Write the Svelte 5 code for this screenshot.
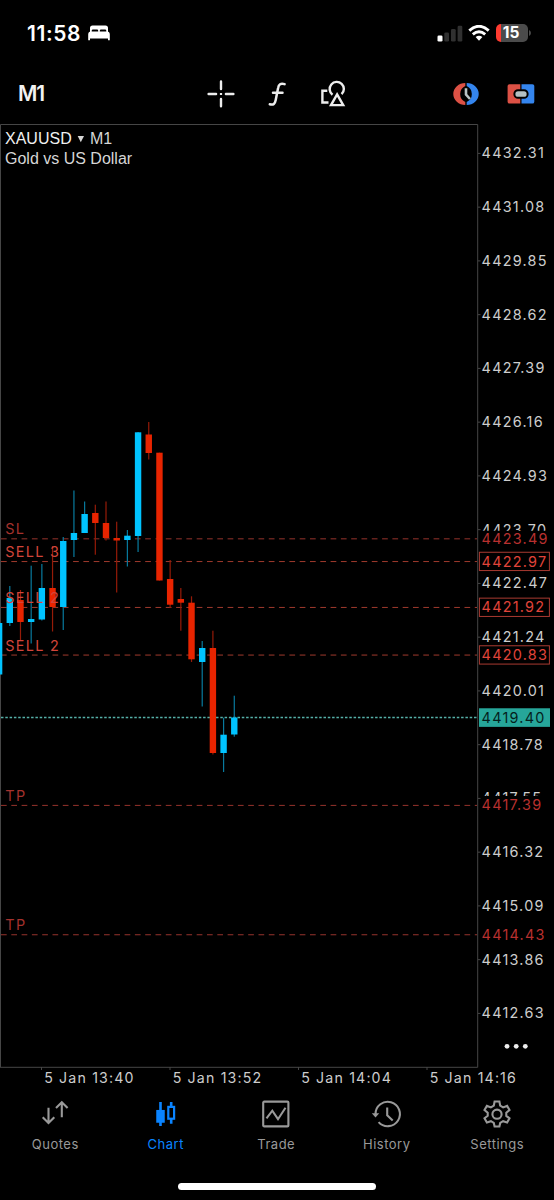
<script>
  const TOP_PRICE = 4432.31;
  const TOP_Y = 153.4;
  const PX_PER_UNIT = 43.7;

  const priceY = (price) => TOP_Y + (TOP_PRICE - price) * PX_PER_UNIT;

  let scale = Array.from({ length: 17 }, (_, i) => TOP_PRICE - i * 1.23);

  let levels = [
    { label: "SL", price: 4423.49, kind: "stop" },
    { label: "SELL 3", price: 4422.97, kind: "order" },
    { label: "SELL 2", price: 4421.92, kind: "order" },
    { label: "SELL 2", price: 4420.83, kind: "order" },
    { label: "TP", price: 4417.39, kind: "stop" },
    { label: "TP", price: 4414.43, kind: "stop" },
  ];

  const bid = 4419.4;

  // [direction, wick top, body top, body bottom, wick bottom]
  let candles = [
    ["up", 623, 623, 674.5, 674.5],
    ["up", 586, 598, 623, 626],
    ["down", 590, 600, 622, 640],
    ["up", 565.7, 619, 622, 643.5],
    ["up", 564, 588, 619.5, 620.5],
    ["down", 546, 588, 607, 631.5],
    ["up", 537, 541, 607, 630],
    ["up", 490.5, 533, 540, 557],
    ["up", 501.5, 514, 533, 533],
    ["down", 504.7, 513, 523, 554.7],
    ["down", 501.5, 523, 538, 540.5],
    ["down", 521.7, 538, 540.5, 592.5],
    ["up", 530, 535.7, 540, 566.5],
    ["up", 432, 432.3, 536, 552],
    ["down", 422, 434.5, 453, 459.5],
    ["down", 452.7, 452.7, 580.5, 580.5],
    ["down", 560, 579, 604.7, 608],
    ["down", 588, 599, 602.7, 630.7],
    ["down", 596.3, 602.7, 659.3, 662],
    ["up", 641, 648, 662, 706.5],
    ["down", 630.7, 648, 753, 754.5],
    ["up", 717.7, 734.7, 753, 772],
    ["up", 695.7, 717.5, 734.5, 736.7],
  ];

  const candleX = (i) => -0.9 + i * 10.69;

  let times = [
    { x: 41.5, text: "5 Jan 13:40" },
    { x: 170, text: "5 Jan 13:52" },
    { x: 298.5, text: "5 Jan 14:04" },
    { x: 427, text: "5 Jan 14:16" },
  ];

  let tabs = ["Quotes", "Chart", "Trade", "History", "Settings"];
  let active = "Chart";
</script>

<div class="screen">
  <header class="status">
    <div class="clock">
      <span>11:58</span>
      <svg width="22" height="16" viewBox="0 0 22 16">
        <path
          d="M2 7V3Q2 0.5 4.5 0.5H17.5Q20 0.5 20 3V7H18.3V5.8Q18.3 4.6 17 4.6H13Q11.8 4.6 11.8 5.8V7H10.2V5.8Q10.2 4.6 9 4.6H5Q3.7 4.6 3.7 5.8V7Z"
        />
        <path d="M0.2 15.3V9.6Q0.2 6.6 3 6.6H19Q21.8 6.6 21.8 9.6V15.3H20V13.6H2V15.3Z" />
      </svg>
    </div>
    <div class="indicators">
      <svg class="signal" width="26" height="17" viewBox="0 0 26 17">
        <rect x="0.5" y="10.5" width="5" height="6" rx="1.3" />
        <rect class="off" x="7.3" y="7.5" width="4.7" height="9" rx="1.3" />
        <rect class="off" x="14" y="4" width="4.7" height="12.5" rx="1.3" />
        <rect class="off" x="20.6" y="0.7" width="4.7" height="15.8" rx="1.3" />
      </svg>
      <svg class="wifi" width="22" height="16" viewBox="0 0 22 16">
        <path class="arc" d="M1.3 5.6Q11 -3 20.7 5.6" />
        <path class="arc" d="M4.8 9.3Q11 4 17.2 9.3" />
        <path d="M7.6 12.1Q11 9.3 14.4 12.1L11 15.8Z" />
      </svg>
      <div class="battery"><span>15</span></div>
      <svg class="nub" width="2" height="6" viewBox="0 0 2 6">
        <path d="M0 0Q2 0.8 2 3Q2 5.2 0 6Z" />
      </svg>
    </div>
  </header>

  <nav class="toolbar">
    <span class="frame">M1</span>
    <div class="tools">
      <svg width="28" height="28" viewBox="0 0 28 28">
        <g class="line" stroke-width="2.4">
          <path d="M14 1.5V9M14 18.9V26.3M1.6 14H9.1M18.9 14H26.4" />
          <path d="M12.9 14H15.1" stroke-width="2" stroke-linecap="butt" />
        </g>
      </svg>
      <svg width="20" height="28" viewBox="0 0 20 28">
        <path
          class="line"
          stroke-width="2.5"
          d="M17.6 4.1C13.6 2.8 11.7 4.5 11.1 8L8.7 20.1C8 23.8 6.5 25.3 2.8 24.3M6 12.7H15.5"
        />
      </svg>
      <svg width="28" height="28" viewBox="0 0 28 28">
        <g class="line shapes" stroke-width="2.4">
          <path d="M8.3 10.8H3.4V22.5H9.5" />
          <path d="M13.5 14.7A7.1 7.1 0 1 1 22.6 14.2" />
          <path d="M18.1 14.4L24.2 25.1H12Z" />
        </g>
      </svg>
    </div>
    <div class="trading">
      <svg width="28" height="24" viewBox="0 0 28 24">
        <path class="red" d="M13.3 1A11.8 10.8 0 0 0 13.3 23V20A8.8 8.8 0 0 1 13.3 4Z" />
        <path class="blue" d="M14.7 1A11.8 10.8 0 0 1 14.7 23V20A8.8 8.8 0 0 0 14.7 4Z" />
        <path class="hand" d="M14 6.2V12.5L18 17" />
      </svg>
      <svg width="28" height="22" viewBox="0 0 28 22">
        <path class="red" d="M2.5 1.2H13.3V20.6H2.5Q0.6 20.6 0.6 18.7V3.1Q0.6 1.2 2.5 1.2Z" />
        <path class="blue" d="M14.5 1.2H25.4Q27.3 1.2 27.3 3.1V18.7Q27.3 20.6 25.4 20.6H14.5Z" />
        <rect class="pill" x="7.4" y="7.2" width="13.2" height="7.6" rx="3.6" />
      </svg>
    </div>
  </nav>

  <svg class="chart" width="554" height="966" viewBox="0 124 554 966">
    <defs>
      {#each scale as price, i}
        <clipPath id="row{i}">
          <rect
            x="478"
            y={priceY(price) - 10}
            width="76"
            height={i === 7 ? 11 : i === 12 ? 7.6 : 20}
          />
        </clipPath>
      {/each}
    </defs>

    <path class="border" d="M0.5 1067V124.5H477.7V1067.3H0" />

    {#each levels as level}
      <line class="level {level.kind}" x1="1" x2="477" y1={priceY(level.price)} y2={priceY(level.price)} />
    {/each}

    <line class="bid" x1="1" x2="478" y1={priceY(bid)} y2={priceY(bid)} />

    {#each candles as [dir, high, top, bottom, low], i}
      <g class={dir}>
        <rect class="wick" x={candleX(i) - 0.6} y={high} width="1.2" height={low - high} />
        <rect x={candleX(i) - 3.2} y={top} width="6.4" height={bottom - top} />
      </g>
    {/each}

    {#each levels as level}
      <text class="tag {level.kind}" x="5.3" y={priceY(level.price) - 4.4}>{level.label}</text>
    {/each}

    <text class="symbol" x="5" y="143.5">XAUUSD</text>
    <path class="caret" d="M77.7 136H84L80.8 142.3Z" />
    <text class="title" x="90" y="143.5">M1</text>
    <text class="title" x="5" y="163.6">Gold vs US Dollar</text>

    {#each scale as price, i}
      <path class="border" d="M478 {priceY(price)}h2.5" />
      <text class="price" x="481.6" y={priceY(price) + 5} clip-path="url(#row{i})">{price.toFixed(2)}</text>
    {/each}

    {#each levels as level}
      {#if level.kind === "order"}
        <rect class="frame-box" x="479.4" y={priceY(level.price) - 9.3} width="70" height="18.3" />
      {/if}
      <text class="price {level.kind}" x="481.6" y={priceY(level.price) + 5}>{level.price.toFixed(2)}</text>
    {/each}

    <rect class="bid-box" x="479" y={priceY(bid) - 9.3} width="71" height="18.6" />
    <text class="price bid-text" x="481.6" y={priceY(bid) + 5}>{bid.toFixed(2)}</text>

    <g class="more">
      <circle cx="507" cy="1046.3" r="2.4" />
      <circle cx="516.2" cy="1046.3" r="2.4" />
      <circle cx="525.3" cy="1046.3" r="2.4" />
    </g>

    {#each times as time}
      <path class="border" d="M{time.x} 1067v3" />
      <text class="time" x={time.x + 2.7} y="1083">{time.text}</text>
    {/each}
  </svg>

  <nav class="tabs">
    {#each tabs as tab}
      <div class="tab" class:active={tab === active}>
        <svg width="32" height="32" viewBox="0 0 32 32">
          {#if tab === "Quotes"}
            <path d="M9.5 9.7V24.6M3.7 19.2L9.5 25L15.3 19.2M22.8 19.3V4.4M17 10L22.8 4.2L28.6 10" />
          {:else if tab === "Chart"}
            <g class="bars">
              <path d="M10.5 4V28M21.2 4V8.5M21.2 21V25.7" stroke-width="2.6" />
              <rect class="solid" x="7.3" y="13" width="6.4" height="10.7" />
              <rect x="18.3" y="8.9" width="5.8" height="11.8" stroke-width="2.2" />
            </g>
          {:else if tab === "Trade"}
            <rect x="3.2" y="3.6" width="25.2" height="24.8" rx="1" />
            <path d="M6.5 20.4L12.3 12.7L18 21.2L25.5 9.7" />
          {:else if tab === "History"}
            <path d="M4.5 16A12.2 12.2 0 1 1 7.6 24.1" />
            <path class="solid head" d="M0.8 15.2H8.2L4.5 19.6Z" />
            <path d="M16.2 9.4V17.2L21.7 22.4" />
          {:else}
            <path
              d="M13.6 3.5H18.4L19.2 7.7L22.1 9.4L26.1 7.9L28.5 12L25.3 14.8V17.9L28.5 20.3L26.1 24.5L22.1 23.2L19.2 24.9L18.4 28.5H13.6L12.8 24.9L9.9 23.2L5.9 24.5L3.5 20.3L6.7 17.7V14.7L3.5 12L5.9 7.9L9.9 9.4L12.8 7.7Z"
            />
            <circle cx="16" cy="16.2" r="4.6" />
          {/if}
        </svg>
        <span>{tab}</span>
      </div>
    {/each}
  </nav>

  <div class="home"></div>
</div>

<style>
  :global(body) {
    background: #000;
  }

  .screen {
    box-sizing: border-box;
    width: 554px;
    height: 1200px;
    background: #000;
    font-family: Inter, "Liberation Sans", sans-serif;
    display: flex;
    flex-direction: column;
    overflow: hidden;
  }

  .status {
    height: 66px;
    flex: none;
    display: flex;
    align-items: center;
    justify-content: space-between;
    padding: 0 23px 0 27px;
    box-sizing: border-box;
    color: #fff;
    fill: #fff;
  }

  .clock {
    display: flex;
    align-items: center;
    gap: 6px;
    font-size: 21px;
    font-weight: 600;
    letter-spacing: 0.6px;
  }

  .clock span {
    width: 55px;
  }

  .indicators {
    display: flex;
    align-items: center;
  }

  .off {
    fill: #303030;
  }

  .wifi {
    margin: 0 6px 0 5px;
  }

  .arc {
    fill: none;
    stroke: #fff;
    stroke-width: 2.9;
  }

  .battery {
    width: 32px;
    height: 18px;
    border-radius: 5px;
    background: linear-gradient(to right, #ff3b30 5px, #4b4b4b 5px);
    font-size: 15.5px;
    font-weight: 700;
    line-height: 18px;
    text-align: center;
  }

  .battery span {
    margin-right: 2px;
  }

  .nub {
    margin-left: 1px;
    fill: #4b4b4b;
  }

  .toolbar {
    height: 58px;
    flex: none;
    display: flex;
    align-items: center;
    padding: 0 19px 3px 18px;
    box-sizing: border-box;
  }

  .frame {
    width: 189px;
    color: #f2f2f2;
    font-size: 21px;
    font-weight: 600;
    letter-spacing: -1.2px;
  }

  .tools {
    display: flex;
    gap: 32px;
  }

  .line {
    fill: none;
    stroke: #ededed;
    stroke-linecap: round;
  }

  .shapes {
    stroke-linecap: butt;
  }

  .trading {
    display: flex;
    align-items: center;
    gap: 27px;
    margin-left: auto;
  }

  .red {
    fill: #dc5145;
  }

  .blue {
    fill: #3485ee;
  }

  .hand {
    fill: none;
    stroke: #b9c3c5;
    stroke-width: 2.6;
  }

  .pill {
    fill: #b4c0c2;
    stroke: #000;
    stroke-width: 2;
  }

  .chart {
    display: block;
    flex: none;
  }

  .border {
    fill: none;
    stroke: #464646;
    stroke-width: 1;
  }

  .level {
    stroke: #96332c;
    stroke-width: 1;
    stroke-dasharray: 5.7 4.6;
  }

  .level.order {
    stroke: #a03a2d;
  }

  .bid {
    stroke: #55b0a8;
    stroke-width: 1.5;
    stroke-dasharray: 2.5 1.8;
  }

  .up {
    fill: #00c3ff;
  }

  .down {
    fill: #e82400;
  }

  .up .wick {
    fill: #087a9e;
  }

  .down .wick {
    fill: #961b08;
  }

  .tag {
    font-size: 14.4px;
    letter-spacing: 1.3px;
  }

  .tag.stop {
    fill: #a5322d;
  }

  .tag.order {
    fill: #d2453a;
  }

  .symbol,
  .title {
    font-family: "Liberation Sans", Arial, sans-serif;
    font-size: 16px;
    fill: #d6d6d6;
  }

  .symbol {
    fill: #f0f0f0;
  }

  .caret {
    fill: #d6d6d6;
  }

  .price {
    font-size: 14.4px;
    letter-spacing: 1.25px;
    fill: #cdcdcd;
  }

  .price.stop {
    fill: #b8302f;
  }

  .price.order {
    fill: #e0443a;
  }

  .frame-box {
    fill: #000;
    stroke: #a93a31;
    stroke-width: 1;
  }

  .bid-box {
    fill: #26a69a;
  }

  .price.bid-text {
    fill: #041f1d;
  }

  .more {
    fill: #eee;
  }

  .time {
    font-size: 14.2px;
    letter-spacing: 1.15px;
    fill: #cdcdcd;
  }

  .tabs {
    display: grid;
    grid-template-columns: repeat(5, 1fr);
    padding: 8px 1.5px 0 0;
    height: 93px;
    box-sizing: border-box;
    flex: none;
  }

  .tab {
    display: flex;
    flex-direction: column;
    align-items: center;
    gap: 5px;
    color: #999;
    font-size: 13px;
    letter-spacing: 0.5px;
    line-height: 18px;
  }

  .tab svg {
    fill: none;
    stroke: currentColor;
    stroke-width: 2.1;
  }

  .tab .solid {
    fill: currentColor;
  }

  .tab .head {
    stroke: none;
  }

  .active {
    color: #0a84ff;
  }

  .home {
    width: 198px;
    height: 7px;
    border-radius: 4px;
    background: #fff;
    margin: 0 auto;
    flex: none;
  }
</style>
